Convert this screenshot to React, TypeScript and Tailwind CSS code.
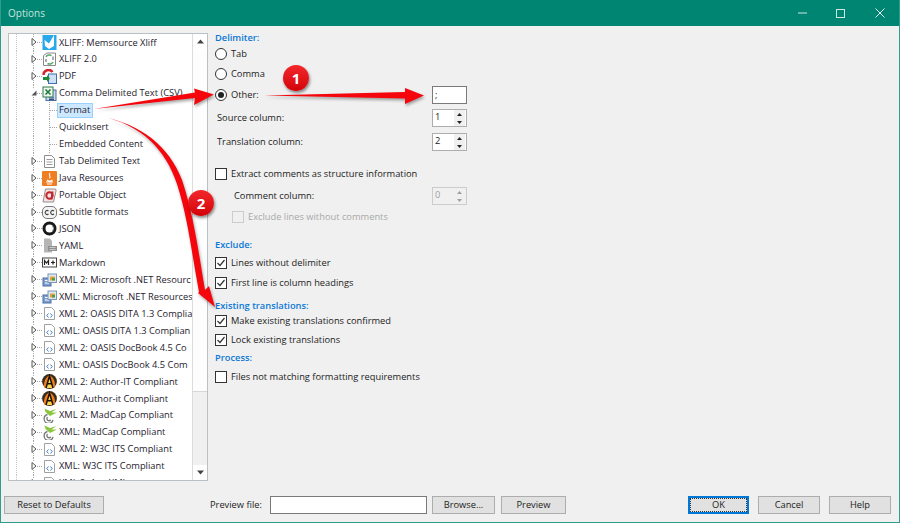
import { ReactNode } from "react";

type IconName = "memsource" | "xliff2" | "pdf" | "csv" | "tab" | "java" | "po" | "cc" | "json" | "yaml" | "md" | "net" | "dita" | "author" | "madcap";

const rows: { label: string; icon?: IconName; open?: boolean; selected?: boolean }[] = [
  { label: "XLIFF: Memsource Xliff", icon: "memsource" },
  { label: "XLIFF 2.0", icon: "xliff2" },
  { label: "PDF", icon: "pdf" },
  { label: "Comma Delimited Text (CSV)", icon: "csv", open: true },
  { label: "Format", selected: true },
  { label: "QuickInsert" },
  { label: "Embedded Content" },
  { label: "Tab Delimited Text", icon: "tab" },
  { label: "Java Resources", icon: "java" },
  { label: "Portable Object", icon: "po" },
  { label: "Subtitle formats", icon: "cc" },
  { label: "JSON", icon: "json" },
  { label: "YAML", icon: "yaml" },
  { label: "Markdown", icon: "md" },
  { label: "XML 2: Microsoft .NET Resourc", icon: "net" },
  { label: "XML: Microsoft .NET Resources", icon: "net" },
  { label: "XML 2: OASIS DITA 1.3 Complia", icon: "dita" },
  { label: "XML: OASIS DITA 1.3 Complian", icon: "dita" },
  { label: "XML 2: OASIS DocBook 4.5 Co", icon: "dita" },
  { label: "XML: OASIS DocBook 4.5 Com", icon: "dita" },
  { label: "XML 2: Author-IT Compliant", icon: "author" },
  { label: "XML: Author-it Compliant", icon: "author" },
  { label: "XML 2: MadCap Compliant", icon: "madcap" },
  { label: "XML: MadCap Compliant", icon: "madcap" },
  { label: "XML 2: W3C ITS Compliant", icon: "dita" },
  { label: "XML: W3C ITS Compliant", icon: "dita" },
  { label: "XML 2: Any XML", icon: "dita" },
];

function FileIcon({ children, name }: { name: IconName; children: ReactNode }) {
  return (
    <svg data-icon={name} width="15" height="15" viewBox="0 0 15 15" className="shrink-0">
      {children}
    </svg>
  );
}

function TreeIcon({ name }: { name: IconName }) {
  switch (name) {
    case "memsource":
      return (
        <FileIcon name={name}>
          <rect x="0.5" y="0" width="14" height="15" fill="#29a9ea" />
          <path d="M2.5 5 L7 8.5 L12 0 L12 11 L7 14 L3 11 Z" fill="#fff" />
        </FileIcon>
      );
    case "xliff2":
      return (
        <FileIcon name={name}>
          <path d="M1.5 3.5 L5 1 H13.5 V13.5 H1.5 Z" fill="#fff" stroke="#8a8a8a" />
          <path d="M4 5 A4 4 0 0 1 9.5 3.5" fill="none" stroke="#5aa86a" strokeWidth="1.5" />
          <path d="M11 10 A4 4 0 0 1 5.5 11.5" fill="none" stroke="#5aa86a" strokeWidth="1.5" />
          <path d="M11 4.5 V8 M4 7 V10" stroke="#777" strokeWidth="1.2" />
        </FileIcon>
      );
    case "pdf":
      return (
        <FileIcon name={name}>
          <path d="M1.5 6 A5 5 0 0 1 10.5 3" fill="none" stroke="#d8232a" strokeWidth="2.4" />
          <rect x="6.5" y="5" width="8" height="9.5" fill="#cfe0f4" stroke="#3d6fb0" />
          <path d="M1 8 H5 V6 L8 9.5 L5 13 V11 H1 Z" fill="#1f8a3a" />
        </FileIcon>
      );
    case "csv":
      return (
        <FileIcon name={name}>
          <rect x="4" y="4" width="10" height="10.5" fill="#c9d8ec" stroke="#4a6ea0" />
          <rect x="1" y="1" width="10" height="10" fill="#eef6ee" stroke="#2f7d4a" />
          <path d="M3.5 3.5 L8.5 8.5 M8.5 3.5 L3.5 8.5" stroke="#1f7a3c" strokeWidth="1.6" />
          <path d="M7 12 H12 M7 13.5 H12" stroke="#34527d" />
        </FileIcon>
      );
    case "tab":
      return (
        <FileIcon name={name}>
          <path d="M2.5 1.5 H9.5 L12.5 4.5 V13.5 H2.5 Z" fill="#fff" stroke="#8c8c8c" />
          <path d="M4.5 5.5 H10.5 M4.5 8 H10.5 M4.5 10.5 H10.5" stroke="#9a9a9a" />
        </FileIcon>
      );
    case "java":
      return (
        <FileIcon name={name}>
          <rect x="0" y="0" width="15" height="15" rx="1" fill="#ef7d22" />
          <path d="M8 2 C6 4.5 9.5 5 7.5 7.5 M5 9 C6.5 10.5 9 10.5 10.5 9 M4 11 H11 M5 13 H10" fill="none" stroke="#fff" strokeWidth="1.1" />
        </FileIcon>
      );
    case "po":
      return (
        <FileIcon name={name}>
          <path d="M3.5 1 H13 Q14.5 1 14 3 L11.5 14 H1 Z" fill="#f3e3e3" stroke="#9a8a8a" />
          <circle cx="7.5" cy="7.5" r="3.2" fill="none" stroke="#c1272d" strokeWidth="2" />
          <path d="M10.5 3.5 L9.5 11.5" stroke="#c1272d" strokeWidth="2" />
        </FileIcon>
      );
    case "cc":
      return (
        <FileIcon name={name}>
          <rect x="0.5" y="1.5" width="14" height="12" rx="4.5" fill="#f4f4f4" stroke="#777" />
          <path d="M6.5 6 A2 2 0 1 0 6.5 9 M12 6 A2 2 0 1 0 12 9" fill="none" stroke="#444" strokeWidth="1.1" />
        </FileIcon>
      );
    case "json":
      return (
        <FileIcon name={name}>
          <circle cx="7.5" cy="7.5" r="5.5" fill="none" stroke="#1a1a1a" strokeWidth="3" />
          <path d="M10.5 5 A4 4 0 0 1 10.5 10" fill="none" stroke="#999" strokeWidth="1" />
        </FileIcon>
      );
    case "yaml":
      return (
        <FileIcon name={name}>
          <path d="M2 0.5 H8 L10 3 V14.5 H2 Z" fill="#b5b5b5" />
          <rect x="6" y="8" width="9" height="5" fill="#8f8f8f" />
          <path d="M7.5 9.5 H13.5 M7.5 11.5 H13.5" stroke="#d8d8d8" strokeWidth="0.8" />
        </FileIcon>
      );
    case "md":
      return (
        <FileIcon name={name}>
          <rect x="0.5" y="3" width="14" height="9" fill="#fff" stroke="#444" />
          <path d="M2.5 10 V5.5 L4.5 8 L6.5 5.5 V10 M11 5.5 V9.5 M9 7.5 H13" fill="none" stroke="#222" strokeWidth="1.2" />
        </FileIcon>
      );
    case "net":
      return (
        <FileIcon name={name}>
          <rect x="1" y="6" width="8" height="8" fill="#7f9fd0" stroke="#4a6ea0" />
          <path d="M3 8.5 H7 M3 11 H7" stroke="#fff" />
          <rect x="6" y="2" width="8.5" height="8.5" fill="#dfe8f5" stroke="#7d95b5" />
          <rect x="8" y="4.5" width="5" height="4" fill="#e2a13a" />
          <rect x="10" y="6" width="3" height="2.5" fill="#4aa04a" />
        </FileIcon>
      );
    case "dita":
      return (
        <FileIcon name={name}>
          <path d="M2.5 1.5 H9.5 L12.5 4.5 V13.5 H2.5 Z" fill="#fff" stroke="#a0a0a0" />
          <path d="M6.5 7.5 L4.8 9.5 L6.5 11.5 M8.5 7.5 L10.2 9.5 L8.5 11.5" fill="none" stroke="#3c7fc4" />
        </FileIcon>
      );
    case "author":
      return (
        <FileIcon name={name}>
          <circle cx="7.5" cy="7.5" r="7.4" fill="#3a2a1c" />
          <path d="M7.5 1 C12 4 14 9 12.5 14 H2.5 C1 9 3 4 7.5 1 Z" fill="#ee7f1f" />
          <path d="M7.5 5 C10 7.5 10.8 10.5 9.8 14 H5.2 C4.2 10.5 5 7.5 7.5 5 Z" fill="#fbd64e" />
          <path d="M4 14 L7.5 2 L11 14 M5.4 9.8 H9.6" fill="none" stroke="#1a1208" strokeWidth="1.5" />
        </FileIcon>
      );
    case "madcap":
      return (
        <FileIcon name={name}>
          <path d="M2.5 0.5 L8 3 L14.5 1 L9.5 4.5 L15 4.5 L8 8 L3.5 4 Z" fill="#8cc63f" />
          <path d="M5.5 6.5 A4.5 4.5 0 1 0 11 12 M5.5 9 A2.2 2.2 0 1 0 8.8 12" fill="none" stroke="#777" strokeWidth="1.3" />
        </FileIcon>
      );
  }
}

function Expander({ open }: { open?: boolean }) {
  return (
    <svg width="6" height="8" viewBox="0 0 6 8" className="absolute left-[-3px] top-[4px] bg-white">
      {open ? <path d="M0.5 6.5 L5.5 1.5 V6.5 Z" fill="#555" /> : <path d="M1 0.5 L5 4 L1 7.5 Z" fill="#fff" stroke="#555" />}
    </svg>
  );
}

function TreeRow({ label, icon, open, selected }: (typeof rows)[number]) {
  return (
    <div className="flex h-[16.96px] shrink-0 items-stretch pl-[7px]">
      <span className="w-[17px] shrink-0 border-l border-dotted border-[#c4c4c4]" />
      {icon ? (
        <>
          <span className="relative flex w-[9px] shrink-0 items-center border-l border-dotted border-[#a8a8a8]">
            <span className="ml-[3px] w-[5px] border-t border-dotted border-[#a8a8a8]" />
            <Expander open={open} />
          </span>
          <span className="flex items-center">
            <TreeIcon name={icon} />
          </span>
          <span className="ml-[2px] self-center whitespace-nowrap">{label}</span>
        </>
      ) : (
        <>
          <span className="w-[16px] shrink-0 border-l border-dotted border-[#a8a8a8]" />
          <span className="flex w-[8px] shrink-0 items-center border-l border-dotted border-[#a8a8a8]">
            <span className="w-[7px] border-t border-dotted border-[#a8a8a8]" />
          </span>
          <span className={`flex items-center whitespace-nowrap pl-[1px] pr-[2px] ${selected ? "my-[1px] border border-[#99d1ff] bg-[#cce8ff]" : "border border-transparent"}`}>
            {label}
          </span>
        </>
      )}
    </div>
  );
}

function Radio({ checked }: { checked?: boolean }) {
  return (
    <span className="flex h-[12px] w-[12px] shrink-0 items-center justify-center rounded-full border border-[#333] bg-white">
      {checked && <span className="h-[6px] w-[6px] rounded-full bg-[#222]" />}
    </span>
  );
}

function Check({ checked, disabled }: { checked?: boolean; disabled?: boolean }) {
  return (
    <span className={`flex h-[12px] w-[12px] shrink-0 items-center justify-center border ${disabled ? "border-[#cccccc] bg-[#f0f0f0]" : "border-[#333] bg-white"}`}>
      {checked && (
        <svg width="10" height="10" viewBox="0 0 10 10">
          <path d="M1.5 5 L4 7.5 L8.5 2" fill="none" stroke="#333" strokeWidth="1.2" />
        </svg>
      )}
    </span>
  );
}

function Option({ label, className, children }: { label: string; className?: string; children: ReactNode }) {
  return (
    <div className={`flex h-[14px] items-center gap-[4px] ${className ?? ""}`}>
      {children}
      <span className="whitespace-nowrap">{label}</span>
    </div>
  );
}

function Heading({ label, className }: { label: string; className?: string }) {
  return <div className={`flex h-[14px] items-center font-semibold text-[#0a78d7] ${className ?? ""}`}>{label}</div>;
}

function Spin({ value, disabled }: { value: string; disabled?: boolean }) {
  const color = disabled ? "#a0a0a0" : "#222";
  return (
    <div className={`flex h-[18px] w-[35px] border ${disabled ? "border-[#cccccc] bg-[#f0f0f0] text-[#a0a0a0]" : "border-[#adadad] bg-white"}`}>
      <span className="flex-1 pl-[2px] leading-[14px]">{value}</span>
      <span className="mr-[1px] flex w-[11px] flex-col justify-center gap-[1px] bg-[#f0f0f0]">
        <svg width="11" height="7" viewBox="0 0 11 7">
          <path d="M3 5 L5.5 2 L8 5 Z" fill={color} />
        </svg>
        <svg width="11" height="7" viewBox="0 0 11 7">
          <path d="M3 2 L5.5 5 L8 2 Z" fill={color} />
        </svg>
      </span>
    </div>
  );
}

function FormRow({ className, children }: { className: string; children: ReactNode }) {
  return <div className={`flex h-[18px] w-[252px] items-center justify-between ${className}`}>{children}</div>;
}

function Button({ label, className }: { label: string; className: string }) {
  return (
    <div className={`flex h-[18px] shrink-0 items-center justify-center border border-[#adadad] bg-[#e1e1e1] ${className}`}>{label}</div>
  );
}

function Badge({ value, className }: { value: string; className: string }) {
  return (
    <span className={`absolute flex h-[26px] w-[26px] items-center justify-center rounded-full bg-linear-to-b from-[#f3262a] to-[#d20006] text-[15px] font-bold text-white shadow-[1px_2px_3px_rgba(0,0,0,0.45)] ${className}`}>
      {value}
    </span>
  );
}

function Overlay() {
  return (
    <>
      <svg width="900" height="523" viewBox="0 0 900 523" className="pointer-events-none absolute left-0 top-0 drop-shadow-[1px_2px_1.5px_rgba(0,0,0,0.35)]">
        <path d="M93 109 L194 98 L193 105 L213 94.5 L193 88.5 L194 92.5 Z" fill="#f5060c" />
        <path d="M263 95.5 L404 92 L404 88 L423 95.5 L404 104 L404 98.5 Z" fill="#f5060c" />
        <path d="M100 116.5 C140 124 165 150 176 184 C187 218 191 255 198 292 L197 293 L214 307 L208 286 L204 290 C198 255 193 216 181 180 C168 146 140 124 100 116.5 Z" fill="#f5060c" />
      </svg>
      <Badge value="1" className="left-[282px] top-[65px]" />
      <Badge value="2" className="left-[187px] top-[190px]" />
    </>
  );
}

export default function App() {
  return (
    <div className="relative flex h-[523px] w-[900px] flex-col overflow-hidden border-x border-b border-[#2f9c8c] bg-[#f0f0f0] font-['Open_Sans',sans-serif] text-[9.3px] text-[#222]">
      {/* Title bar */}
      <div className="-mx-px flex h-[26px] shrink-0 items-center bg-[#008573] pl-[8px] text-[10px] text-[#c6e4df]">
        <span>Options</span>
        <div className="ml-auto flex items-center">
          <svg width="9" height="2" viewBox="0 0 9 2" className="mr-[29px]">
            <path d="M0 1 H9" stroke="#cde9e4" />
          </svg>
          <svg width="9" height="9" viewBox="0 0 9 9" className="mr-[30px]">
            <rect x="0.5" y="0.5" width="8" height="8" fill="none" stroke="#cde9e4" />
          </svg>
          <svg width="10" height="10" viewBox="0 0 10 10" className="mr-[15px]">
            <path d="M0.5 0.5 L9.5 9.5 M9.5 0.5 L0.5 9.5" stroke="#dff2ee" />
          </svg>
        </div>
      </div>

      {/* Tree and options */}
      <div className="flex min-h-0 flex-1 pt-[5px]">
        <div className="ml-[7px] mt-[2px] flex h-[448px] w-[200px] shrink-0 border border-[#b9c0c6] bg-white">
          <div className="flex min-w-0 flex-1 flex-col overflow-hidden text-[#26222e]">
            {rows.map((row) => (
              <TreeRow key={row.label} {...row} />
            ))}
          </div>
          <div className="flex w-[15px] shrink-0 flex-col border-l border-[#dcdcdc] bg-[#f0f0f0]">
            <div className="flex h-[15px] items-center justify-center bg-white">
              <svg width="7" height="5" viewBox="0 0 7 5">
                <path d="M3.5 0.5 L7 4.5 H0 Z" fill="#444" />
              </svg>
            </div>
            <div className="h-[343px] border-b border-[#d6d6d6] bg-[#fdfdfd]" />
            <div className="flex-1" />
            <div className="flex h-[15px] items-center justify-center bg-white">
              <svg width="7" height="5" viewBox="0 0 7 5">
                <path d="M3.5 4.5 L7 0.5 H0 Z" fill="#444" />
              </svg>
            </div>
          </div>
        </div>

        <div className="ml-[7px] flex flex-col">
          <Heading label="Delimiter:" />
          <Option label="Tab" className="mt-[2px]"><Radio /></Option>
          <Option label="Comma" className="mt-[6px]"><Radio /></Option>
          <FormRow className="mt-[5px]">
            <Option label="Other:"><Radio checked /></Option>
            <div className="h-[18px] w-[35px] border border-[#7a7a7a] bg-white pl-[2px] leading-[16px]">;</div>
          </FormRow>
          <FormRow className="mt-[5px]">
            <span className="pl-[2px]">Source column:</span>
            <Spin value="1" />
          </FormRow>
          <FormRow className="mt-[6px]">
            <span className="pl-[2px]">Translation column:</span>
            <Spin value="2" />
          </FormRow>
          <Option label="Extract comments as structure information" className="mt-[16px]"><Check /></Option>
          <FormRow className="mt-[6px]">
            <span className="pl-[19px]">Comment column:</span>
            <Spin value="0" disabled />
          </FormRow>
          <Option label="Exclude lines without comments" className="ml-[17px] mt-[5px] text-[#a8a8a8]"><Check disabled /></Option>
          <Heading label="Exclude:" className="mt-[14px]" />
          <Option label="Lines without delimiter" className="mt-[4px]"><Check checked /></Option>
          <Option label="First line is column headings" className="mt-[6px]"><Check checked /></Option>
          <Heading label="Existing translations:" className="mt-[9px]" />
          <Option label="Make existing translations confirmed" className="mt-[1px]"><Check checked /></Option>
          <Option label="Lock existing translations" className="mt-[5px]"><Check checked /></Option>
          <Heading label="Process:" className="mt-[4px]" />
          <Option label="Files not matching formatting requirements" className="mt-[5px]"><Check /></Option>
        </div>
      </div>

      {/* Footer buttons */}
      <div className="mb-[8px] flex h-[18px] shrink-0 items-center">
        <Button label="Reset to Defaults" className="ml-[3px] w-[100px]" />
        <span className="ml-[106px] w-[60px] whitespace-nowrap">Preview file:</span>
        <div className="h-[18px] w-[157px] shrink-0 border border-[#7a7a7a] bg-white" />
        <Button label="Browse..." className="ml-[5px] w-[63px]" />
        <Button label="Preview" className="ml-[6px] w-[65px]" />
        <div className="ml-[122px] flex h-[18px] w-[61px] shrink-0 items-center justify-center border-2 border-[#0078d7] bg-[#e1e1e1]">
          <span className="flex h-[14px] w-[57px] items-center justify-center border border-dotted border-[#333]">OK</span>
        </div>
        <Button label="Cancel" className="ml-[9px] w-[62px]" />
        <Button label="Help" className="ml-[9px] w-[62px]" />
      </div>

      <Overlay />
    </div>
  );
}
